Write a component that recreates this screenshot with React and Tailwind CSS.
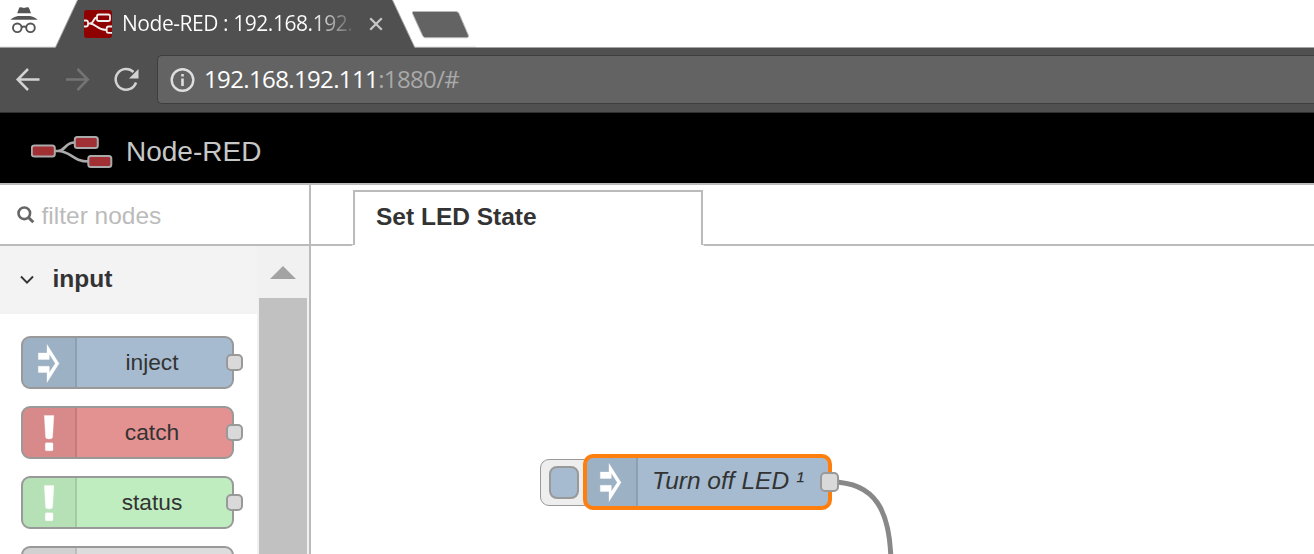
import React from 'react';

function Port({ className = '' }) {
  return <span className={`absolute h-[17px] w-[17px] rounded-[5px] border-2 border-[#999] bg-[#d9d9d9] ${className}`} />;
}

function ArrowIcon() {
  return (
    <svg className="h-[42px] w-[24px] shrink-0" viewBox="0 0 24 42">
      <path
        fill="#fff"
        stroke="#fff"
        strokeOpacity="0.3"
        strokeWidth="1"
        d="M1.3 11H10V2.5L22 21.5L10 40.5V30.5H1.3V24.3H12.3V30.5L18.3 21.5L12.3 12V17.5H1.3Z"
      />
    </svg>
  );
}

function BangIcon() {
  return (
    <svg className="h-[42px] w-[24px] shrink-0" viewBox="0 0 24 42">
      <path
        fill="#fff"
        stroke="#fff"
        strokeOpacity="0.3"
        strokeWidth="1"
        d="M7.3 3.5H16.9L15.6 25.3Q15.3 27 12 27T8.6 25.3ZM8.3 31.8Q8.3 30.8 9.3 30.8H15Q16 30.8 16 31.8V37.8Q16 38.8 15 38.8H9.3Q8.3 38.8 8.3 37.8Z"
      />
    </svg>
  );
}

function DotIcon() {
  return (
    <svg className="h-[42px] w-[24px] shrink-0" viewBox="0 0 24 42">
      <path fill="#fff" d="M11 3L14 7V12H8V7Z" />
    </svg>
  );
}

function PaletteNode({ label, color, icon }) {
  return (
    <div className={`relative flex h-[53px] w-[213px] shrink-0 rounded-[9px] border-2 border-[#999] ${color}`}>
      <div className="flex w-[54px] items-center justify-center rounded-l-[7px] border-r-2 border-black/10 bg-black/5">
        {icon}
      </div>
      <div className="flex flex-1 items-center justify-center pr-[5px] text-[22.75px] leading-none text-[#333]">{label}</div>
      {label && <Port className="-right-[11px] top-[16px]" />}
    </div>
  );
}

function BrowserChrome() {
  return (
    <div className="flex h-[113px] flex-col border-b border-[#303030] bg-[#505050] font-['Open_Sans','Noto_Sans',sans-serif]">
      <div className="flex h-[48px]">
        <svg className="h-[48px] w-[84px] shrink-0" viewBox="0 0 84 48">
          <path d="M-1 -1H78L55.5 47.3H-1Z" fill="#fff" stroke="#a5a5a5" />
          <g fill="#555">
            <path d="M19.3 7.5Q21 7 24 8Q27 7 28.8 7.5L31 13.2H17.2Z" />
            <path d="M10.5 19.8Q12 17.5 18 16H30Q36 17.5 37.5 19.8Z" />
          </g>
          <g fill="none" stroke="#555" strokeWidth="1.9">
            <circle cx="17.3" cy="27.8" r="4.3" />
            <circle cx="30.5" cy="27.8" r="4.3" />
            <path d="M21.7 27.2Q24 25.9 26.3 27.2" />
          </g>
        </svg>
        <div className="flex w-[308px] shrink-0 items-center">
          <svg className="h-[28px] w-[28px]" viewBox="0 0 28 28">
            <rect width="28" height="28" rx="3" fill="#8f0000" />
            <g fill="none" stroke="#eee" strokeWidth="1.8">
              <path d="M0 10.5H2Q4 10.5 4 12.5V14.5Q4 16.5 2 16.5H0" />
              <path d="M4 13.5H6C10 13.5 9 7.5 13 7.5M6 13.5C12 13.5 13 20 22.5 20" />
              <rect x="13" y="4.5" width="13" height="6.5" rx="1.8" />
              <path d="M28 16.5H24.5Q22.7 16.5 22.7 18.3V21Q22.7 22.8 24.5 22.8H28" />
            </g>
          </svg>
          <div className="-mt-[2px] ml-[10px] w-[232px] whitespace-nowrap bg-gradient-to-r from-white from-[82%] to-transparent to-[101%] bg-clip-text text-[21px] leading-[30px] tracking-[-0.45px] text-transparent">
            Node-RED : 192.168.192.
          </div>
          <svg className="ml-[15px] h-[14px] w-[14px]" viewBox="0 0 14 14">
            <path d="M1.2 1.2L12.8 12.8M12.8 1.2L1.2 12.8" stroke="#c8c8c8" strokeWidth="2.2" />
          </svg>
        </div>
        <svg className="h-[48px] w-[84px] shrink-0" viewBox="0 0 84 48">
          <path d="M0 -1L22.7 47.3H85V-1Z" fill="#fff" stroke="#a5a5a5" />
          <path d="M21.5 11.5H64Q66 11.5 67 13.5L76.3 35Q77 37.7 75 37.7H33.5Q31.5 37.7 30.5 35.5L20.5 13.5Q19.8 11.5 21.5 11.5Z" fill="#636363" stroke="#b8b8b8" />
        </svg>
        <div className="h-[48px] flex-1 border-b border-[#a5a5a5] bg-white" />
      </div>
      <div className="flex h-[64px] items-start pt-[7px]">
        <svg className="h-[50px] w-[157px] shrink-0" viewBox="0 0 157 50" fill="none" strokeWidth="2.5">
          <path d="M39.5 24.5H18M28 14L17.7 24.5L28 35" stroke="#d3d3d3" />
          <path d="M66 24.5H87.5M77.5 14L87.8 24.5L77.5 35" stroke="#747474" />
          <path d="M133.5 17A10.4 10.4 0 1 0 136 27.5" stroke="#d3d3d3" />
          <path d="M138.5 14V23.5H129Z" fill="#d3d3d3" />
        </svg>
        <div className="flex h-[49px] flex-1 items-center rounded-l-[5px] border border-r-0 border-[#3e3e3e] bg-[#636363] pl-[12px]">
          <svg className="h-[26px] w-[26px]" viewBox="0 0 26 26">
            <circle cx="12.5" cy="13" r="10.8" fill="none" stroke="#dedede" strokeWidth="2.4" />
            <path d="M12.5 11.5V19M12.5 7V9.5" stroke="#dedede" strokeWidth="2.6" />
          </svg>
          <div className="-mt-[2px] ml-[8px] whitespace-nowrap text-[24px] leading-[40px] tracking-[-0.63px] text-white">
            192.168.192.111<span className="text-[#a9a9a9]">:1880/#</span>
          </div>
        </div>
      </div>
    </div>
  );
}

function Header() {
  return (
    <header className="flex h-[70px] items-center bg-black pl-[31px]">
      <svg className="mt-[8px] h-[32px] w-[82px]" viewBox="0 0 82 32">
        <g fill="none" stroke="#aaa" strokeWidth="2.7">
          <path d="M23 15H27C35 15 33 6.5 44 6.5M27 15C40 15 41 25.5 58 25.5" />
        </g>
        <g fill="#a03033" stroke="#aaa" strokeWidth="2">
          <rect x="0.8" y="9.5" width="23" height="11" rx="2.5" />
          <rect x="43.8" y="1" width="23" height="11" rx="2.5" />
          <rect x="57.3" y="20" width="23" height="11" rx="2.5" />
        </g>
      </svg>
      <span className="ml-[13px] mt-[8px] text-[28px] leading-none text-[#c7c7c7]">Node-RED</span>
    </header>
  );
}

function Palette() {
  return (
    <aside className="flex w-[311px] shrink-0 flex-col border-r-2 border-[#bbb]">
      <div className="flex h-[61px] shrink-0 items-center border-b-2 border-[#bbb] pl-[17px]">
        <svg className="h-[18px] w-[18px]" viewBox="0 0 18 18" fill="none" stroke="#666">
          <circle cx="7.3" cy="7.3" r="5.8" strokeWidth="2.6" />
          <path d="M11.5 11.5L16.3 16.3" strokeWidth="3" />
        </svg>
        <span className="ml-[6.5px] mt-[4px] text-[24.5px] leading-none text-[#bbb]">filter nodes</span>
      </div>
      <div className="flex min-h-0 flex-1">
        <div className="flex w-[257px] flex-col">
          <div className="flex h-[68px] shrink-0 items-center bg-[#f3f3f3] pl-[20px]">
            <svg className="h-[10px] w-[14px]" viewBox="0 0 14 10">
              <path d="M1 1.5L7 7.7L13 1.5" fill="none" stroke="#333" strokeWidth="1.9" />
            </svg>
            <span className="-mt-[1px] ml-[18.5px] text-[24.5px] font-bold leading-none text-[#333]">input</span>
          </div>
          <div className="flex flex-col gap-[17px] pl-[21px] pt-[22px]">
            <PaletteNode label="inject" color="bg-[#a6bbcf]" icon={<ArrowIcon />} />
            <PaletteNode label="catch" color="bg-[#e49191]" icon={<BangIcon />} />
            <PaletteNode label="status" color="bg-[#c0edc0]" icon={<BangIcon />} />
            <PaletteNode label="" color="bg-[#ddd]" icon={<DotIcon />} />
          </div>
        </div>
        <div className="flex w-[52px] flex-col bg-[#f1f1f1] px-[2px]">
          <div className="flex h-[52px] shrink-0 items-center justify-center">
            <svg className="h-[13px] w-[26px]" viewBox="0 0 26 13">
              <path d="M13 0L26 13H0Z" fill="#a3a3a3" />
            </svg>
          </div>
          <div className="flex-1 bg-[#c1c1c1]" />
        </div>
      </div>
    </aside>
  );
}

function Workspace() {
  return (
    <main className="flex min-w-0 flex-1 flex-col">
      <div className="flex h-[61px] shrink-0">
        <div className="w-[42px] rounded-br-[2px] border-b-2 border-[#bbb]" />
        <div className="mt-[5px] h-[55px] w-[350px] border-2 border-b-0 border-[#bbb] pl-[21px] pt-[12px] text-[24.5px] font-bold leading-[25px] text-[#333]">
          Set LED State
        </div>
        <div className="flex-1 rounded-bl-[2px] border-b-2 border-[#bbb]" />
      </div>
      <div className="relative flex-1 overflow-hidden">
        <svg className="absolute left-[519px] top-[230px] h-[80px] w-[80px]" viewBox="0 0 80 80">
          <path d="M1 6C45 6 61 34 61 90" fill="none" stroke="#888" strokeWidth="5" />
        </svg>
        <div className="absolute left-[229px] top-[213px] flex h-[47px] w-[60px] rounded-[9px] border-[1.5px] border-[#999] bg-[#eee] pl-[8px] pt-[6px]">
          <div className="h-[33px] w-[30px] rounded-[8px] border-2 border-[#999] bg-[#a6bbcf]" />
        </div>
        <div className="absolute left-[272px] top-[208px] flex h-[56px] w-[249px] rounded-[10px] border-4 border-[#ff7f0e] bg-[#a6bbcf]">
          <div className="flex w-[51px] items-center justify-center rounded-l-[6px] border-r-2 border-black/10 bg-black/5 pr-[2px]">
            <ArrowIcon />
          </div>
          <span className="ml-[14px] mt-[10px] whitespace-nowrap text-[24.5px] italic leading-[25px] text-[#333]">Turn off LED ¹</span>
        </div>
        <span className="absolute left-[509px] top-[226px] h-[20px] w-[19px] rounded-[5px] border-2 border-[#999] bg-[#d9d9d9]" />
      </div>
    </main>
  );
}

export default function App() {
  return (
    <div className="flex h-[554px] w-[1314px] flex-col overflow-hidden bg-white font-['Liberation_Sans',Arial,sans-serif]">
      <BrowserChrome />
      <Header />
      <div className="flex min-h-0 flex-1 border-t-2 border-[#bbb]">
        <Palette />
        <Workspace />
      </div>
    </div>
  );
}
